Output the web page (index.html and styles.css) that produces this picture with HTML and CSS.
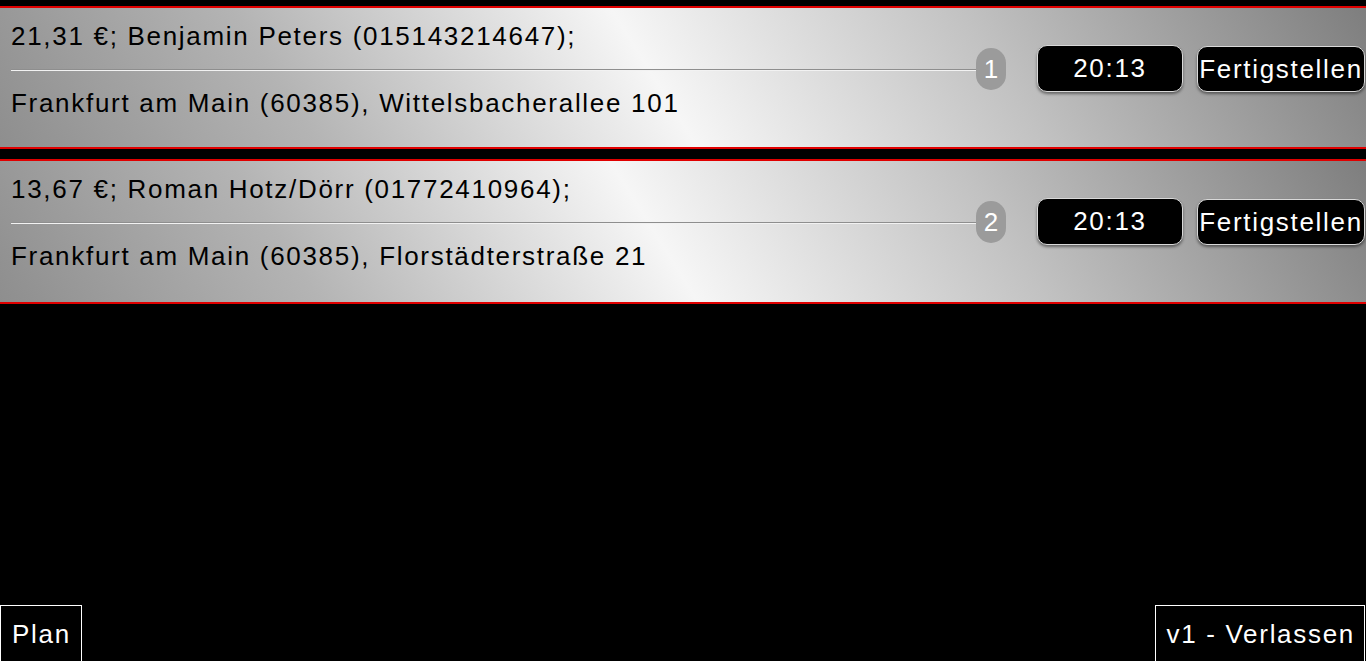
FILE: index.html
```html
<!DOCTYPE html>
<html lang="de">
  <head>
    <meta charset="UTF-8" />
    <title>Lieferungen</title>
    <link rel="stylesheet" href="styles.css">
  </head>
  <body>
    <div class="screen">
      <div class="orders">
        <div class="order">
          <div class="order-info">
            <div class="order-line">21,31 €; Benjamin Peters (015143214647);</div>
            <div class="order-divider"></div>
            <div class="order-line">Frankfurt am Main (60385), Wittelsbacherallee 101</div>
          </div>
          <div class="order-actions">
            <span class="order-no">1</span>
            <span class="btn btn-time">20:13</span>
            <button class="btn btn-finish" type="button">Fertigstellen</button>
          </div>
        </div>

        <div class="order">
          <div class="order-info">
            <div class="order-line">13,67 €; Roman Hotz/Dörr (01772410964);</div>
            <div class="order-divider"></div>
            <div class="order-line">Frankfurt am Main (60385), Florstädterstraße 21</div>
          </div>
          <div class="order-actions">
            <span class="order-no">2</span>
            <span class="btn btn-time">20:13</span>
            <button class="btn btn-finish" type="button">Fertigstellen</button>
          </div>
        </div>
      </div>

      <div class="footer">
        <button class="nav-btn" type="button">Plan</button>
        <button class="nav-btn nav-exit" type="button">v1 - Verlassen</button>
      </div>
    </div>
  </body>
</html>
```

FILE: styles.css
```css
body {
  margin: 0;
  background: #000;
  color: #000;
  font-family: "Liberation Sans", Arial, sans-serif;
  font-size: 26px;
  letter-spacing: 1.7px;
}
.screen {
  height: 100vh;
  display: flex;
  flex-direction: column;
  justify-content: space-between;
  overflow: hidden;
}
.orders {
  display: flex;
  flex-direction: column;
  gap: 10px;
  padding-top: 6px;
}
.order {
  display: flex;
  height: 139px;
  border-top: 2px solid #e00000;
  border-bottom: 2px solid #e00000;
  background: linear-gradient(58deg, #8e8e8e 0%, #b4b4b4 22%, #f6f6f6 48%, #c2c2c2 72%, #7e7e7e 100%);
}
.order + .order {
  height: 141px;
}
.order-info {
  flex: 1;
  padding: 14px 0 0 11px;
}
.order-line {
  line-height: 28px;
  white-space: nowrap;
}
.order-divider {
  margin: 19px 0 18px;
  border-top: 1px solid #8e8e8e;
  border-bottom: 1px solid #f2f2f2;
}
.order-actions {
  display: flex;
  align-items: center;
  align-self: flex-start;
  padding-top: 37px;
  margin-right: 1px;
}
.order-no {
  width: 30px;
  height: 42px;
  margin-right: 31px;
  border-radius: 15px;
  background: #9b9b9b;
  color: #fff;
  line-height: 42px;
  text-align: center;
  letter-spacing: 0;
}
.btn {
  box-sizing: border-box;
  display: block;
  padding: 0;
  background: #000;
  color: #fff;
  font: inherit;
  letter-spacing: inherit;
  text-align: center;
  white-space: nowrap;
  border: 1px solid #d9d9d9;
  border-radius: 10px;
  box-shadow: 0 2px 3px rgba(0, 0, 0, 0.45);
}
.btn-time {
  width: 146px;
  height: 47px;
  line-height: 45px;
  margin-right: 14px;
}
.btn-finish {
  width: 168px;
  height: 46px;
  line-height: 44px;
  cursor: pointer;
}
.footer {
  display: flex;
  justify-content: space-between;
  align-items: flex-end;
}
.nav-btn {
  box-sizing: border-box;
  height: 56px;
  padding: 0 10px 0 11px;
  background: #000;
  color: #fff;
  font: inherit;
  letter-spacing: inherit;
  line-height: 28px;
  text-align: left;
  border: 1px solid #fff;
  border-bottom: 0;
  cursor: pointer;
}
.nav-exit {
  margin-right: 1px;
  padding: 0 9px 0 10px;
}
```
